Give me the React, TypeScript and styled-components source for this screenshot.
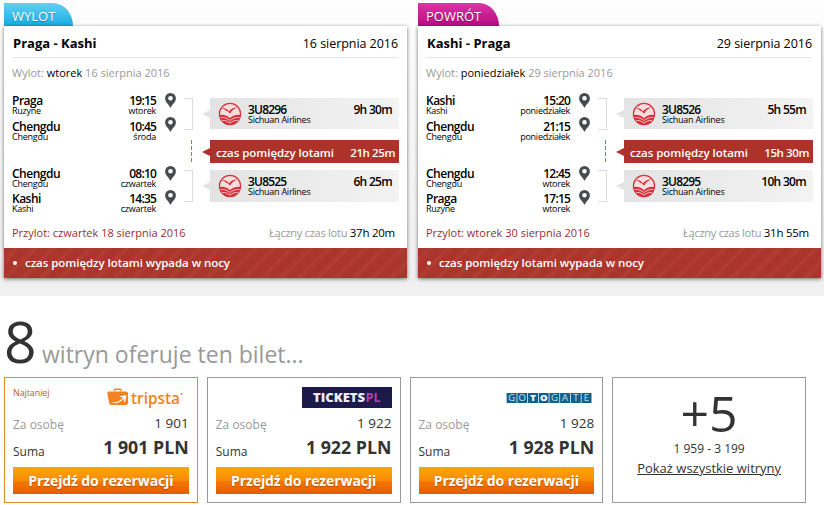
import styled, { createGlobalStyle } from 'styled-components';

const GlobalStyle = createGlobalStyle`
  * {
    box-sizing: border-box;
  }
  body {
    margin: 0;
    background-color: #fff;
    color: #000;
    font-family: 'Open Sans', 'Noto Sans', sans-serif;
    font-size: 12px;
    white-space: nowrap;
    overflow: hidden;
  }
`;

const Page = styled.div`
  width: 824px;
  height: 505px;
  overflow: hidden;
`;
const Journey = styled.section`
  display: flex;
  gap: 11px;
  height: 296px;
  padding: 3px 3px 0 4px;
  background: linear-gradient(#fefefe, #f0f0f0);
`;
const Direction = styled.div`
  width: 403px;
`;
const Tab = styled.div<{ $back: boolean }>`
  width: ${(props) => (props.$back ? 81 : 69)}px;
  height: 23px;
  padding-left: 8px;
  border-top-right-radius: 20px 23px;
  background: ${(props) =>
    props.$back
      ? 'linear-gradient(#d935a4, #b80c83)'
      : 'linear-gradient(#64cff5, #16aee2)'};
  color: #fff;
  font-size: 13px;
  line-height: 26px;
  text-shadow: 0 1px 1px rgba(0, 0, 0, 0.3);
`;
const Card = styled.div`
  height: 252px;
  background-color: #fff;
  box-shadow: 0 1px 4px rgba(0, 0, 0, 0.55);
`;
const CardHeader = styled.div`
  display: flex;
  justify-content: space-between;
  height: 32px;
  margin: 0 9px 0 8px;
  padding-left: 1px;
  border-bottom: 1px solid #e6e6e6;
  line-height: 35px;
`;
const Route = styled.span`
  font-size: 13px;
  font-weight: 700;
`;
const HeaderDate = styled.span`
  font-size: 12.5px;
  letter-spacing: -0.05px;
`;
const Departure = styled.div`
  height: 35px;
  padding-left: 8px;
  color: #999;
  font-size: 11px;
  line-height: 30px;

  b {
    color: #000;
    font-weight: 400;
  }
`;
const Body = styled.div`
  display: flex;
  height: 129px;
  padding: 0 8px;
`;
const Stops = styled.div`
  width: 144px;
  padding-top: 1px;
`;
const StopPair = styled.div`
  height: 73px;
`;
const Stop = styled.div<{ $height: number }>`
  display: flex;
  justify-content: space-between;
  height: ${(props) => props.$height}px;
`;
const StopText = styled.div<{ $right?: boolean }>`
  text-align: ${(props) => (props.$right ? 'right' : 'left')};
  letter-spacing: ${(props) => (props.$right ? -0.15 : 0)}px;
`;
const Main = styled.div<{ $spacing: number }>`
  height: 11px;
  font-size: 12px;
  font-weight: 600;
  letter-spacing: ${(props) => props.$spacing}px;
  line-height: 14px;
`;
const Small = styled.div`
  font-size: 9px;
  letter-spacing: -0.25px;
  line-height: 12px;
`;
const Pins = styled.div`
  width: 11px;
  margin-left: 9px;
`;
const PinPair = styled.div`
  display: flex;
  flex-direction: column;
  gap: 9px;
  height: 73px;
`;
const Brackets = styled.div`
  display: flex;
  flex-direction: column;
  width: 9px;
  margin: 5px 9px 0 8px;
`;
const Bracket = styled.div`
  height: 32px;
  border: 1px solid #ddd;
  border-left: none;
`;
const Dashes = styled.div`
  width: 1px;
  height: 23px;
  margin: 10px 0 7px 7px;
  background: repeating-linear-gradient(#c8702a 0 4px, transparent 4px 6px);
`;
const Flights = styled.div`
  display: flex;
  flex-direction: column;
  width: 197px;
  padding-top: 5px;
`;
const FlightRow = styled.div<{ $height: number; $gap: number }>`
  display: flex;
  align-items: center;
  height: ${(props) => props.$height}px;
  margin-bottom: ${(props) => props.$gap}px;
`;
const Arrow = styled.div<{ $color: string }>`
  border: solid transparent;
  border-width: 4px 8px 4px 0;
  border-right-color: ${(props) => props.$color};
`;
const Flight = styled.div`
  display: flex;
  flex: 1;
  height: 100%;
  padding: 4px 7px 0 8px;
  background: linear-gradient(90deg, #e3e3e3, #f3f3f3);
`;
const FlightText = styled.div`
  flex: 1;
  padding: 1px 0 0 6px;
`;
const Duration = styled.div`
  padding-top: 1px;
  font-weight: 600;
  letter-spacing: -0.7px;
  line-height: 14px;
`;
const Layover = styled.div`
  display: flex;
  flex: 1;
  justify-content: space-between;
  height: 100%;
  padding: 0 4px 0 6px;
  background-color: #ad332a;
  color: #fff;
  font-size: 11.5px;
  font-weight: 600;
  letter-spacing: -0.05px;
  line-height: 26px;
`;
const LayoverTime = styled.span`
  letter-spacing: -0.4px;
`;
const Summary = styled.div`
  display: flex;
  justify-content: space-between;
  height: 26px;
  padding: 0 12px 0 8px;
  color: #923133;
  font-size: 11px;
  line-height: 22px;
`;
const Total = styled.span`
  color: #999;
  letter-spacing: -0.25px;

  b {
    color: #000;
    font-size: 11.5px;
    font-weight: 400;
  }
`;
const Warning = styled.div`
  display: flex;
  align-items: center;
  height: 30px;
  padding: 0 0 1px 9px;
  background: repeating-linear-gradient(
    135deg,
    #ab342b 0 5px,
    #b13d34 9px,
    #ab342b 13px
  );
  color: #fff;
  font-size: 11.5px;
  font-weight: 600;
  letter-spacing: -0.05px;
`;
const Dot = styled.i`
  width: 4px;
  height: 4px;
  margin-right: 8px;
  border-radius: 50%;
  background-color: #fff;
`;

const Offers = styled.section`
  padding-left: 4px;
`;
const Heading = styled.h1`
  display: flex;
  align-items: baseline;
  height: 81px;
  margin: 0;
  color: #999;
  font-size: 23px;
  font-weight: 400;
  line-height: 90px;
`;
const Count = styled.span`
  width: 38px;
  color: #333;
  font-size: 57px;
`;
const OfferGrid = styled.div`
  display: grid;
  grid-template-columns: repeat(4, 1fr);
  gap: 9px;
  width: 802px;
`;
const Offer = styled.div<{ $best?: boolean }>`
  height: 126px;
  padding: 9px 8px 0;
  border: 1px solid ${(props) => (props.$best ? '#df8b28' : '#999')};
  color: #333;
`;
const OfferTop = styled.div`
  display: flex;
  justify-content: space-between;
  height: 26px;
`;
const Cheapest = styled.span`
  color: #c7590f;
  font-size: 9px;
  letter-spacing: -0.1px;
  line-height: 12px;
`;
const Logo = styled.svg`
  display: block;
  margin-left: auto;
`;
const PriceRow = styled.div`
  display: flex;
  justify-content: space-between;
  height: 23px;
  color: #999;
  line-height: 24px;
`;
const TotalRow = styled.div`
  display: flex;
  justify-content: space-between;
  height: 31px;
  line-height: 32px;
`;
const Price = styled.span`
  color: #333;
  font-size: 13.5px;
  line-height: 21px;
`;
const TotalPrice = styled.strong`
  font-size: 17.8px;
  font-weight: 700;
  line-height: 22px;
`;
const Book = styled.button`
  display: block;
  width: 100%;
  height: 27px;
  padding: 0;
  border: none;
  background: linear-gradient(#fca608, #f88c05 50%, #f37a02 52%, #e85a00);
  color: #fff;
  font-family: inherit;
  font-size: 14px;
  font-weight: 700;
  letter-spacing: -0.1px;
  line-height: 25px;
  text-shadow: 0 1px 1px rgba(120, 50, 0, 0.5);
`;
const More = styled(Offer)`
  display: flex;
  flex-direction: column;
  align-items: center;
`;
const MoreCount = styled.div`
  height: 51px;
  font-size: 50px;
  line-height: 53px;
`;
const MoreRange = styled.div`
  font-size: 12px;
  line-height: 21px;
`;
const MoreLink = styled.a`
  font-size: 13px;
  line-height: 18px;
  text-decoration: underline;
`;

const Pin = () => (
  <svg width="11" height="15" viewBox="0 0 11 15">
    <path
      fill="#454a4d"
      fillRule="evenodd"
      d="M5.5 0A5.4 5.4 0 0 0 .1 5.4C.1 9.200 4 11 5.5 15 7 11 10.900 9.200 10.900 5.400A5.400 5.400 0 0 0 5.5 0Zm0 2.900a2.300 2.300 0 1 1 0 4.600 2.300 2.300 0 0 1 0-4.600Z"
    />
  </svg>
);

const AirlineLogo = () => (
  <svg width="24" height="24" viewBox="0 0 24 24">
    <circle cx="12" cy="12" r="10.6" fill="#f6dedf" stroke="#d8333d" strokeWidth="1.2" />
    <path
      d="M4 6.500c3-.6 5.500.8 7 3 1.800-2.700 4.500-4.200 8.500-4-3.500 1.200-5.500 2.800-7.500 6.200C10 9.400 7.500 7.600 4 6.500Z"
      fill="#d8333d"
    />
    <path
      d="M1.500 13c4-.7 7 .2 10.500 3 3.500-2.800 6.500-3.700 10.500-3-.2 5.500-4.500 10-10.500 10S1.700 18.500 1.500 13Z"
      fill="#d8333d"
    />
    <path
      d="M2.500 15.500c4-.5 7 1 9.500 3 2.500-2 5.500-3.500 9.500-3M4 18.500c3.500-.4 6 1 8 2.500 2-1.500 4.500-2.900 8-2.500"
      fill="none"
      stroke="#f6dedf"
      strokeWidth=".8"
    />
  </svg>
);

const TripstaLogo = () => (
  <Logo width="82" height="22" viewBox="0 0 82 22">
    <path d="M7.500 4V3q0-.8 1-.8h4.500q1 0 1 .8v1" fill="none" stroke="#f58220" strokeWidth="1.5" />
    <path d="M2 4.500h17q2 0 2 2V16q0 2-2 2H4.500q-2 0-2.300-2L.3 6.500q-.3-2 1.700-2Z" fill="#f58220" />
    <path
      d="M4 15.500c5.500.5 9.500-1.700 12-5.300l-3.500-.4.800-.9 6.200-.6-1.300 6.300-1 .8-.5-3.800c-3.200 4.200-7.500 5.700-12.700 3.900Z"
      fill="#fff"
    />
    <text x="24" y="16.500" fill="#f58220" fontSize="15.500" fontWeight="600" textLength="49" lengthAdjust="spacingAndGlyphs">
      tripsta
    </text>
    <circle cx="74.500" cy="7" r="1" fill="#f58220" />
  </Logo>
);

const TicketsLogo = () => (
  <Logo width="90" height="21" viewBox="0 0 90 21">
    <rect width="90" height="21" fill="#1c1a4b" />
    <text x="11" y="14.700" fill="#f1edf8" fontSize="12" fontWeight="800" textLength="52" lengthAdjust="spacingAndGlyphs">
      TICKETS
    </text>
    <text x="63.500" y="14.700" fill="#b63db2" fontSize="12" fontWeight="700" textLength="15" lengthAdjust="spacingAndGlyphs">
      PL
    </text>
  </Logo>
);

const GotogateLogo = () => (
  <Logo width="88" height="21" viewBox="0 0 88 21">
    {'GOTOGATE'.split('').map((letter, i) => (
      <g key={i}>
        <rect x={0.6 + i * 10.7} y="6" width="10" height="10" fill="#11608e" />
        <text
          x={5.6 + i * 10.7}
          y="14.3"
          fill={i === 2 || i === 3 ? '#fff' : '#c4e0ec'}
          fontSize="9.5"
          fontWeight={i === 2 || i === 3 ? 800 : 500}
          textAnchor="middle"
        >
          {letter}
        </text>
      </g>
    ))}
  </Logo>
);

interface StopData {
  city: string;
  airport: string;
  time: string;
  day: string;
}

interface TripData {
  label: string;
  route: string;
  date: string;
  departDay: string;
  stops: StopData[];
  flights: { code: string; duration: string }[];
  layover: string;
  arrival: string;
  total: string;
}

const trips: TripData[] = [
  {
    label: 'WYLOT',
    route: 'Praga - Kashi',
    date: '16 sierpnia 2016',
    departDay: 'wtorek',
    stops: [
      { city: 'Praga', airport: 'Ruzyne', time: '19:15', day: 'wtorek' },
      { city: 'Chengdu', airport: 'Chengdu', time: '10:45', day: 'środa' },
      { city: 'Chengdu', airport: 'Chengdu', time: '08:10', day: 'czwartek' },
      { city: 'Kashi', airport: 'Kashi', time: '14:35', day: 'czwartek' },
    ],
    flights: [
      { code: '3U8296', duration: '9h 30m' },
      { code: '3U8525', duration: '6h 25m' },
    ],
    layover: '21h 25m',
    arrival: 'czwartek 18 sierpnia 2016',
    total: '37h 20m',
  },
  {
    label: 'POWRÓT',
    route: 'Kashi - Praga',
    date: '29 sierpnia 2016',
    departDay: 'poniedziałek',
    stops: [
      { city: 'Kashi', airport: 'Kashi', time: '15:20', day: 'poniedziałek' },
      { city: 'Chengdu', airport: 'Chengdu', time: '21:15', day: 'poniedziałek' },
      { city: 'Chengdu', airport: 'Chengdu', time: '12:45', day: 'wtorek' },
      { city: 'Praga', airport: 'Ruzyne', time: '17:15', day: 'wtorek' },
    ],
    flights: [
      { code: '3U8526', duration: '5h 55m' },
      { code: '3U8295', duration: '10h 30m' },
    ],
    layover: '15h 30m',
    arrival: 'wtorek 30 sierpnia 2016',
    total: '31h 55m',
  },
];

const offers = [
  { price: '1 901', logo: <TripstaLogo />, best: true },
  { price: '1 922', logo: <TicketsLogo />, best: false },
  { price: '1 928', logo: <GotogateLogo />, best: false },
];

function FlightBox({ code, duration }: { code: string; duration: string }) {
  return (
    <Flight>
      <AirlineLogo />
      <FlightText>
        <Main $spacing={-0.8}>{code}</Main>
        <Small>Sichuan Airlines</Small>
      </FlightText>
      <Duration>{duration}</Duration>
    </Flight>
  );
}

function Trip({ trip, back }: { trip: TripData; back: boolean }) {
  return (
    <Direction>
      <Tab $back={back}>{trip.label}</Tab>
      <Card>
        <CardHeader>
          <Route>{trip.route}</Route>
          <HeaderDate>{trip.date}</HeaderDate>
        </CardHeader>
        <Departure>
          Wylot: <b>{trip.departDay}</b> {trip.date}
        </Departure>
        <Body>
          <Stops>
            {[0, 2].map((start) => (
              <StopPair key={start}>
                {trip.stops.slice(start, start + 2).map((stop) => (
                  <Stop key={stop.time} $height={start === 0 ? 26 : 25}>
                    <StopText>
                      <Main $spacing={-0.5}>{stop.city}</Main>
                      <Small>{stop.airport}</Small>
                    </StopText>
                    <StopText $right>
                      <Main $spacing={-0.8}>{stop.time}</Main>
                      <Small>{stop.day}</Small>
                    </StopText>
                  </Stop>
                ))}
              </StopPair>
            ))}
          </Stops>
          <Pins>
            <PinPair>
              <Pin />
              <Pin />
            </PinPair>
            <PinPair>
              <Pin />
              <Pin />
            </PinPair>
          </Pins>
          <Brackets>
            <Bracket />
            <Dashes />
            <Bracket />
          </Brackets>
          <Flights>
            <FlightRow $height={31} $gap={11}>
              <Arrow $color="#e3e3e3" />
              <FlightBox {...trip.flights[0]} />
            </FlightRow>
            <FlightRow $height={23} $gap={7}>
              <Arrow $color="#ad332a" />
              <Layover>
                <span>czas pomiędzy lotami</span>
                <LayoverTime>{trip.layover}</LayoverTime>
              </Layover>
            </FlightRow>
            <FlightRow $height={32} $gap={0}>
              <Arrow $color="#e3e3e3" />
              <FlightBox {...trip.flights[1]} />
            </FlightRow>
          </Flights>
        </Body>
        <Summary>
          <span>Przylot: {trip.arrival}</span>
          <Total>
            Łączny czas lotu <b>{trip.total}</b>
          </Total>
        </Summary>
        <Warning>
          <Dot />
          czas pomiędzy lotami wypada w nocy
        </Warning>
      </Card>
    </Direction>
  );
}

function App() {
  return (
    <Page>
      <GlobalStyle />
      <Journey>
        {trips.map((trip, i) => (
          <Trip key={trip.label} trip={trip} back={i === 1} />
        ))}
      </Journey>
      <Offers>
        <Heading>
          <Count>8</Count>
          witryn oferuje ten bilet...
        </Heading>
        <OfferGrid>
          {offers.map((offer) => (
            <Offer key={offer.price} $best={offer.best}>
              <OfferTop>
                {offer.best && <Cheapest>Najtaniej</Cheapest>}
                {offer.logo}
              </OfferTop>
              <PriceRow>
                Za osobę <Price>{offer.price}</Price>
              </PriceRow>
              <TotalRow>
                Suma <TotalPrice>{offer.price} PLN</TotalPrice>
              </TotalRow>
              <Book>Przejdź do rezerwacji</Book>
            </Offer>
          ))}
          <More>
            <MoreCount>+5</MoreCount>
            <MoreRange>1 959 - 3 199</MoreRange>
            <MoreLink>Pokaż wszystkie witryny</MoreLink>
          </More>
        </OfferGrid>
      </Offers>
    </Page>
  );
}

export default App;
